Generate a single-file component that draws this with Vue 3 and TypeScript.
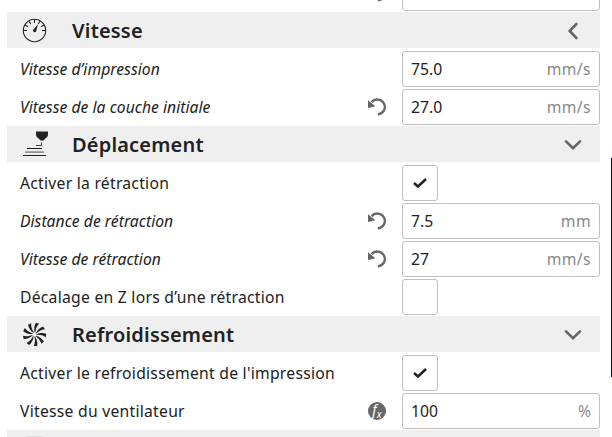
<script setup lang="ts">
type Kind = 'section' | 'text' | 'check'
interface Item {
  kind: Kind
  label: string
  icon?: 'speed' | 'travel' | 'fan' | 'next'
  open?: boolean
  changed?: boolean
  action?: 'reset' | 'fx'
  value?: string
  unit?: string
  checked?: boolean
}

const items: Item[] = [
  { kind: 'text', label: '', action: 'reset', value: '', unit: '' },
  { kind: 'section', label: 'Vitesse', icon: 'speed', open: false },
  { kind: 'text', label: 'Vitesse d’impression', changed: true, value: '75.0', unit: 'mm/s' },
  { kind: 'text', label: 'Vitesse de la couche initiale', changed: true, action: 'reset', value: '27.0', unit: 'mm/s' },
  { kind: 'section', label: 'Déplacement', icon: 'travel', open: true },
  { kind: 'check', label: 'Activer la rétraction', checked: true },
  { kind: 'text', label: 'Distance de rétraction', changed: true, action: 'reset', value: '7.5', unit: 'mm' },
  { kind: 'text', label: 'Vitesse de rétraction', changed: true, action: 'reset', value: '27', unit: 'mm/s' },
  { kind: 'check', label: 'Décalage en Z lors d’une rétraction', checked: false },
  { kind: 'section', label: 'Refroidissement', icon: 'fan', open: true },
  { kind: 'check', label: "Activer le refroidissement de l'impression", checked: true },
  { kind: 'text', label: 'Vitesse du ventilateur', action: 'fx', value: '100', unit: '%' },
  { kind: 'section', label: '', icon: 'next' },
]

const blades: number[] = Array.from({ length: 9 }, (_, i) => i * 40)
const ticks: number[] = [-90, -60, -30, 0, 30, 60, 90]
</script>

<template>
  <div class="panel">
    <div class="list">
      <div v-for="(item, i) in items" :key="i" class="item">
        <div v-if="item.kind === 'section'" class="section">
          <svg v-if="item.icon === 'speed'" class="cat" viewBox="0 0 24 24">
            <circle cx="12.500" cy="12.500" r="11.200" fill="none" stroke="#222" stroke-width="1.100" />
            <path v-for="t in ticks" :key="t" d="M12.500 1.500V5" stroke="#222" stroke-width="1" :transform="`rotate(${t} 12.5 12.5)`" />
            <path d="M16 6.300L14.200 13.300a1.700 1.700 0 1 1-3-1.600z" fill="#222" />
          </svg>
          <svg v-else-if="item.icon === 'travel'" class="cat travel" viewBox="0 0 26 26">
            <path d="M13 .5h12v3.400c-.2 1.600-1.300 2.500-2.400 3.400L20.500 9.500h-3L15.400 7.300C14.300 6.400 13.200 5.500 13 3.900z" fill="#222" />
            <path d="M18.500 11.500v3h-5.500" fill="none" stroke="#444" stroke-width="1.100" />
            <path d="M4 17.500h15" stroke="#222" stroke-width="1" />
            <path d="M2.200 21.100h19" stroke="#888" stroke-width="1.600" />
            <path d="M0 24.500h23" stroke="#222" stroke-width="1" />
          </svg>
          <svg v-else-if="item.icon === 'fan'" class="cat" viewBox="0 0 24 24">
            <path
              v-for="b in blades"
              :key="b"
              d="M12.300 10.500C10.900 8 10.300 4.300 11.400 .8l3.400 .3C12.900 4.300 12.400 7.500 12.900 10.500z"
              fill="#222"
              :transform="`rotate(${b + 12} 12.5 12.5)`"
            />
          </svg>
          <span v-else class="cat next"></span>
          <h2 class="title">{{ item.label }}</h2>
          <svg v-if="item.open !== undefined" class="chevron" viewBox="0 0 20 20">
            <path :d="item.open ? 'M3 7.400L10 14.200L17 7.400' : 'M13.400 4L6.700 11L13.400 18'" fill="none" stroke="#666" stroke-width="2.600" stroke-linecap="round" />
          </svg>
        </div>
        <div v-else class="row">
          <span class="label" :class="{ changed: item.changed }">{{ item.label }}</span>
          <svg v-if="item.action === 'reset'" class="action" viewBox="0 0 18 18">
            <path d="M3.600 4.300A7.400 7.400 0 1 1 9.800 16.300" fill="none" stroke="#666" stroke-width="2.300" />
            <path d="M0 2.200L7.400 8.300L0 9.900z" fill="#666" />
          </svg>
          <span v-else-if="item.action === 'fx'" class="action fx"><i>f</i><small>x</small></span>
          <div v-if="item.kind === 'text'" class="field">
            <span class="value">{{ item.value }}</span>
            <span class="unit" :class="{ percent: item.unit === '%' }">{{ item.unit }}</span>
          </div>
          <div v-else class="box">
            <svg v-if="item.checked" class="check" viewBox="0 0 14 12">
              <path d="M1 6L5 9.500L13 2" fill="none" stroke="#222" stroke-width="2.500" />
            </svg>
          </div>
        </div>
      </div>
    </div>
    <div class="edge"></div>
  </div>
</template>

<style>
body {
  background: #fff;
  overflow: hidden;
}
</style>

<style scoped>
.panel {
  display: flex;
  justify-content: space-between;
  width: 612px;
  height: 437px;
  overflow: hidden;
  font-family: "Noto Sans", "Open Sans", sans-serif;
  font-size: 15.7px;
  color: #222;
}
.list {
  width: 593px;
  margin: -26px 0 0 7px;
}
.item {
  height: 38px;
}
.section {
  display: flex;
  align-items: center;
  height: 36px;
  background: #efefef;
}
.cat {
  flex: none;
  width: 24px;
  height: 24px;
  margin: 0 26px 0 15px;
  overflow: visible;
}
.travel {
  width: 26px;
  height: 26px;
  margin: 0 23px 0 16px;
}
.next {
  width: 16px;
  height: 24px;
  margin-left: 20px;
  background: #ddd;
}
.title {
  flex: 1;
  margin: 0;
  padding-top: 2px;
  font-size: 20px;
  font-weight: 600;
  line-height: 34px;
  letter-spacing: 0.18px;
}
.chevron {
  width: 20px;
  height: 20px;
  margin-right: 17px;
}
.row {
  display: flex;
  align-items: center;
  height: 36px;
  padding: 1px 0 1px 13px;
}
.label {
  flex: 1;
  line-height: 20px;
  white-space: nowrap;
  letter-spacing: 0.26px;
}
.changed {
  letter-spacing: 0.03px;
}
.label.changed {
  font-style: italic;
}
.action {
  flex: none;
  width: 18px;
  height: 18px;
  margin-right: 16px;
}
.fx {
  display: flex;
  align-items: center;
  justify-content: center;
  border-radius: 50%;
  background: #666;
  color: #fff;
  line-height: 18px;
}
.fx i {
  font-size: 14px;
  margin-top: -3px;
}
.fx small {
  font-size: 10px;
  font-style: italic;
  margin-top: 5px;
}
.field,
.box {
  box-sizing: border-box;
  flex: none;
  display: flex;
  align-items: center;
  height: 36px;
  border: 1px solid #c0c0c0;
  border-radius: 3px;
  background: #fff;
}
.field {
  justify-content: space-between;
  width: 198px;
  padding: 0 8px;
}
.value,
.unit {
  line-height: 20px;
}
.box {
  justify-content: center;
  width: 36px;
  margin-right: 162px;
}
.check {
  width: 14px;
  height: 12px;
}
.unit {
  color: #888;
  letter-spacing: 0.4px;
}
.percent {
  letter-spacing: 0;
}
.edge {
  width: 1px;
  height: 219px;
  margin-top: 158px;
  background: #08083c;
}
</style>
